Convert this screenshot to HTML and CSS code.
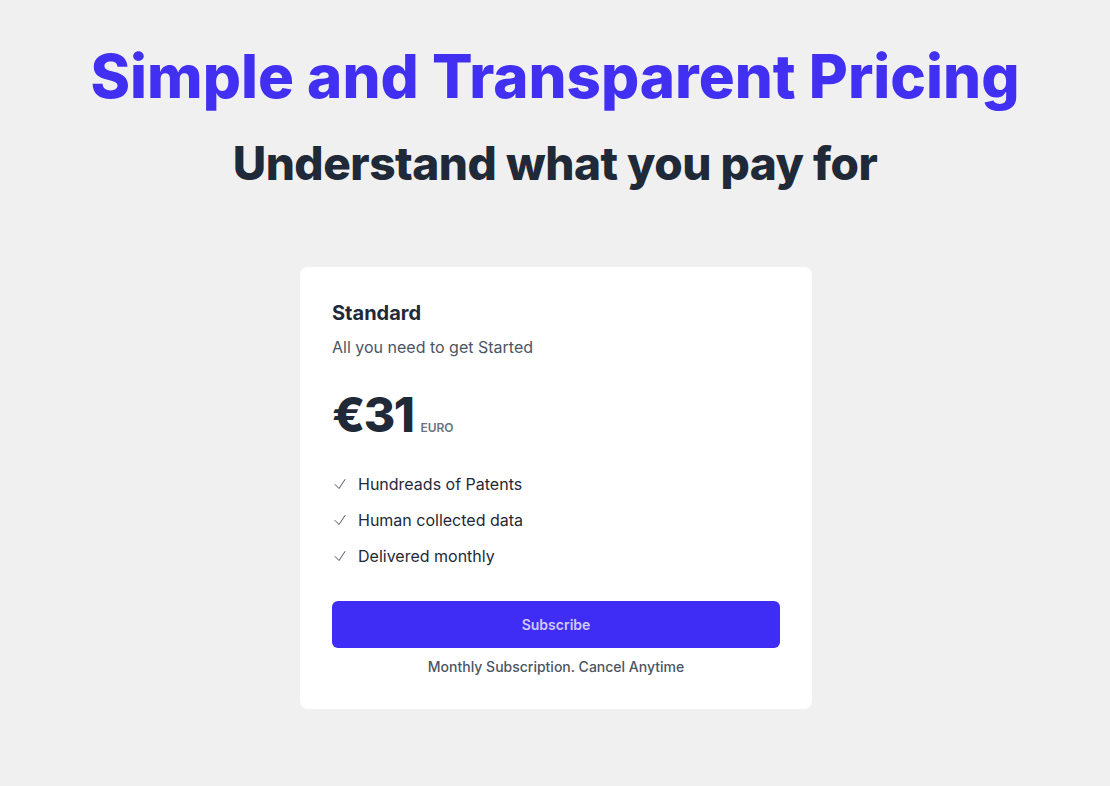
FILE: index.html
```html
<!DOCTYPE html>
<html lang="en">
  <head>
    <meta charset="UTF-8" />
    <meta name="viewport" content="width=device-width, initial-scale=1.0" />
    <title>Pricing</title>
    <link rel="stylesheet" href="styles.css">
  </head>
  <body>
    <section class="pricing">
      <h1>Simple and Transparent Pricing</h1>
      <h2>Understand what you pay for</h2>

      <div class="card">
        <h3>Standard</h3>
        <p class="tagline">All you need to get Started</p>

        <div class="price">
          <span class="amount">€31</span>
          <span class="currency">EURO</span>
        </div>

        <ul class="features">
          <li>
            <svg viewBox="0 0 24 24" class="check"><path d="M4.5 12.75l6 6 9-13.5" /></svg>
            Hundreads of Patents
          </li>
          <li>
            <svg viewBox="0 0 24 24" class="check"><path d="M4.5 12.75l6 6 9-13.5" /></svg>
            Human collected data
          </li>
          <li>
            <svg viewBox="0 0 24 24" class="check"><path d="M4.5 12.75l6 6 9-13.5" /></svg>
            Delivered monthly
          </li>
        </ul>

        <button type="button">Subscribe</button>
        <p class="note">Monthly Subscription. Cancel Anytime</p>
      </div>
    </section>
  </body>
</html>
```

FILE: styles.css
```css
body {
  font-family: Inter, "Noto Sans", sans-serif;
  margin: 0;
  padding: 0;
  min-height: 100vh;
  background-color: #f0f0f0;
  color: #1f2937;
}
.pricing {
  display: flex;
  flex-direction: column;
  align-items: center;
  padding: 46px 16px;
}
h1 {
  margin: 0;
  font-size: 60px;
  line-height: 60px;
  font-weight: 800;
  color: #4130f2;
}
h2 {
  margin: 33px 0 0;
  font-size: 46px;
  line-height: 48px;
  font-weight: 800;
  letter-spacing: -0.5px;
  color: #1f2937;
}
.card {
  margin: 80px 0 0 2px;
  width: 512px;
  box-sizing: border-box;
  padding: 32px;
  background-color: #fff;
  border-radius: 8px;
}
h3 {
  margin: 0;
  font-size: 20px;
  line-height: 28px;
  font-weight: 700;
  color: #1f2937;
}
.tagline {
  margin: 8px 0 0;
  font-size: 16px;
  line-height: 24px;
  color: #4b5563;
}
.price {
  display: flex;
  align-items: baseline;
  gap: 7px;
  margin-top: 24px;
}
.amount {
  font-size: 48px;
  line-height: 64px;
  font-weight: 800;
  letter-spacing: -1.5px;
  color: #1f2937;
}
.currency {
  font-size: 12px;
  font-weight: 600;
  color: #6b7280;
}
.features {
  list-style: none;
  margin: 25px 0 0;
  padding: 0;
  display: flex;
  flex-direction: column;
  gap: 12px;
}
.features li {
  display: flex;
  align-items: center;
  gap: 10px;
  font-size: 16px;
  line-height: 24px;
  color: #1f2937;
}
.check {
  width: 16px;
  height: 16px;
  fill: none;
  stroke: #4b5563;
  stroke-width: 1.5;
  stroke-linecap: round;
  stroke-linejoin: round;
}
button {
  display: block;
  width: 100%;
  margin-top: 33px;
  height: 47px;
  border: none;
  border-radius: 6px;
  background-color: #3f2df5;
  color: #cfcaf8;
  font-family: inherit;
  font-size: 14px;
  font-weight: 600;
  cursor: pointer;
}
.note {
  margin: 9px 0 0;
  text-align: center;
  font-size: 14px;
  line-height: 20px;
  font-weight: 500;
  color: #4b5563;
}
```
